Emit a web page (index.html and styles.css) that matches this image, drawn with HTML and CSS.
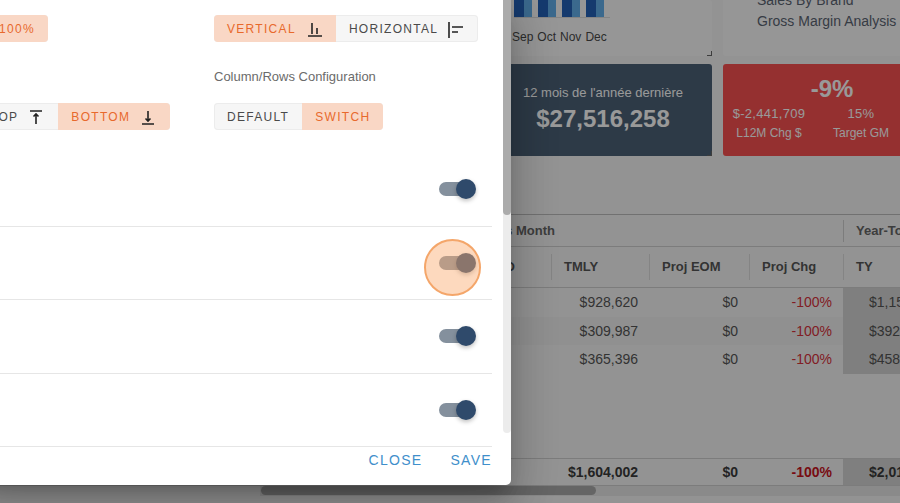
FILE: index.html
```html
<!DOCTYPE html>
<html lang="en">
<head>
    <meta charset="UTF-8">
    <title>Chart Settings</title>
    <link rel="stylesheet" href="styles.css">
</head>
<body>
    <div class="page">
        <main class="dashboard">
            <section class="tiles">
                <div class="tile chart-card">
                    <div class="bars">
                        <div class="bar-pair"><i></i><b></b></div>
                        <div class="bar-pair"><i></i><b></b></div>
                        <div class="bar-pair"><i></i><b></b></div>
                        <div class="bar-pair"><i></i><b></b></div>
                    </div>
                    <div class="months"><span>Sep</span><span>Oct</span><span>Nov</span><span>Dec</span></div>
                    <span class="resize-handle"></span>
                </div>
                <div class="tile links-card">
                    <div class="link-item">Sales By Brand</div>
                    <div class="link-item">Gross Margin Analysis</div>
                </div>
                <div class="tile kpi-dark">
                    <div class="kpi-label">12 mois de l'année dernière</div>
                    <div class="kpi-value">$27,516,258</div>
                    <span class="resize-handle"></span>
                </div>
                <div class="tile kpi-red">
                    <div class="kpi-percent">-9%</div>
                    <div class="kpi-split">
                        <div>
                            <div class="kpi-num">$-2,441,709</div>
                            <div class="kpi-cap">L12M Chg $</div>
                        </div>
                        <div>
                            <div class="kpi-num">15%</div>
                            <div class="kpi-cap">Target GM</div>
                        </div>
                    </div>
                </div>
            </section>

            <section class="report">
                <div class="report-row group-row">
                    <div class="cell group-this">This Month</div>
                    <div class="cell group-ytd">Year-To-Date</div>
                </div>
                <div class="report-row head-row">
                    <div class="cell head-first">MTD</div>
                    <div class="cell">TMLY</div>
                    <div class="cell">Proj EOM</div>
                    <div class="cell">Proj Chg</div>
                    <div class="cell">TY</div>
                </div>
                <div class="report-row data-row">
                    <div class="cell"></div>
                    <div class="cell num">$928,620</div>
                    <div class="cell num">$0</div>
                    <div class="cell num neg">-100%</div>
                    <div class="cell num ty">$1,154,220</div>
                </div>
                <div class="report-row data-row stripe">
                    <div class="cell"></div>
                    <div class="cell num">$309,987</div>
                    <div class="cell num">$0</div>
                    <div class="cell num neg">-100%</div>
                    <div class="cell num ty">$392,110</div>
                </div>
                <div class="report-row data-row">
                    <div class="cell"></div>
                    <div class="cell num">$365,396</div>
                    <div class="cell num">$0</div>
                    <div class="cell num neg">-100%</div>
                    <div class="cell num ty">$458,740</div>
                </div>
                <div class="report-spacer"></div>
                <div class="report-row total-row">
                    <div class="cell"></div>
                    <div class="cell num">$1,604,002</div>
                    <div class="cell num">$0</div>
                    <div class="cell num neg">-100%</div>
                    <div class="cell num ty">$2,010,070</div>
                </div>
            </section>

            <div class="hscroll"><span class="hscroll-thumb"></span></div>
        </main>

        <div class="scrim"></div>

        <div class="modal">
            <div class="modal-body">
                <div class="options">
                    <div class="option">
                        <div class="btn-group size-group">
                            <button class="active">100%</button>
                        </div>
                    </div>
                    <div class="option">
                        <div class="btn-group">
                            <button class="active">VERTICAL
                                <svg viewBox="0 0 18 18"><path d="M3 16h14M7 3v11M12 8v6" /></svg>
                            </button>
                            <button>HORIZONTAL
                                <svg viewBox="0 0 18 18"><path d="M2 2v16M5 7h11M5 12h6" /></svg>
                            </button>
                        </div>
                    </div>
                    <div class="option">
                        <div class="option-label"></div>
                        <div class="btn-group">
                            <button>TOP
                                <svg viewBox="0 0 18 18"><path d="M3 3h12M9 16V6M6.5 8.5 9 6l2.5 2.5" /></svg>
                            </button>
                            <button class="active">BOTTOM
                                <svg viewBox="0 0 18 18"><path d="M3 16h12M9 3v10M6.5 10.5 9 13l2.5-2.5" /></svg>
                            </button>
                        </div>
                    </div>
                    <div class="option">
                        <div class="option-label">Column/Rows Configuration</div>
                        <div class="btn-group">
                            <button>DEFAULT</button>
                            <button class="active">SWITCH</button>
                        </div>
                    </div>
                </div>

                <div class="toggle-row"><span class="toggle"></span></div>
                <div class="toggle-row">
                    <span class="toggle pressed"></span>
                </div>
                <div class="toggle-row"><span class="toggle"></span></div>
                <div class="toggle-row"><span class="toggle"></span></div>

                <div class="vscroll"><span class="vscroll-thumb"></span></div>
            </div>
            <div class="modal-actions">
                <button class="text-btn">CLOSE</button>
                <button class="text-btn">SAVE</button>
            </div>
        </div>
    </div>
</body>
</html>
```

FILE: styles.css
```css
* {
    box-sizing: border-box;
}
html, body {
    margin: 0;
    height: 100%;
    overflow: hidden;
}
body {
    font-family: "Liberation Sans", Arial, sans-serif;
}
.page {
    position: relative;
    width: 900px;
    height: 503px;
    overflow: hidden;
    background-color: #f6f6f6;
}

/* dashboard behind the dialog */
.dashboard {
    width: 900px;
    height: 503px;
    padding-left: 494px;
}
.tiles {
    display: grid;
    grid-template-columns: 218px 218px;
    grid-template-rows: 56px 92px;
    gap: 8px 11px;
}
.tile {
    position: relative;
    border-radius: 3px;
}
.chart-card, .links-card {
    background-color: #fbfbfb;
}
.bars {
    display: flex;
    gap: 6px;
    height: 18px;
    margin-left: 20px;
    width: 96px;
    padding-right: 6px;
    border-bottom: 1px solid #ddd;
}
.bar-pair {
    display: flex;
    width: 18px;
}
.bar-pair i {
    width: 10px;
    background-color: #2461b8;
}
.bar-pair b {
    width: 8px;
    background-color: #63b0ec;
}
.months {
    display: flex;
    gap: 4px;
    margin: 12px 0 0 18px;
    font-size: 12px;
    line-height: 14px;
    color: #4a4a4a;
}
.links-card {
    padding-left: 34px;
    margin-top: -7px;
    font-size: 14px;
    color: #5a6472;
}
.link-item {
    line-height: 21px;
    height: 21px;
}
.links-card .link-item:first-child {
    margin-top: -3px;
}
.links-card .link-item:last-child {
    margin-top: 0;
    line-height: 21px;
}
.resize-handle {
    position: absolute;
    right: 0;
    bottom: 0;
    width: 5px;
    height: 5px;
    border-right: 1px solid #666;
    border-bottom: 1px solid #666;
}
.kpi-dark {
    background-color: #4b6177;
    color: #fff;
    text-align: center;
    padding-top: 21px;
}
.kpi-label {
    font-size: 13px;
    line-height: 15px;
}
.kpi-value {
    font-size: 24px;
    font-weight: bold;
    line-height: 28px;
    margin-top: 5px;
}
.kpi-red {
    background-color: #f85050;
    color: #fff;
    text-align: center;
    padding-top: 11px;
}
.kpi-percent {
    font-size: 24px;
    font-weight: bold;
    line-height: 28px;
}
.kpi-split {
    display: grid;
    grid-template-columns: 92px 92px;
    margin: 3px 0 0 0;
}
.kpi-num {
    font-size: 13px;
    line-height: 15px;
    letter-spacing: 0.3px;
}
.kpi-cap {
    font-size: 12px;
    line-height: 14px;
    margin-top: 5px;
}

/* report table */
.report {
    margin-left: -494px;
    margin-top: 58px;
    color: #3b3b3b;
    font-size: 13px;
}
.report-row {
    display: grid;
    grid-template-columns: 551px 98px 100px 94px 57px;
}
.group-row {
    height: 33px;
    grid-template-columns: 843px 57px;
    border-top: 1px solid #bdbdbd;
    border-bottom: 1px solid #cfcfcf;
    align-items: center;
    font-weight: bold;
    color: #666;
    white-space: nowrap;
}
.group-this {
    text-align: right;
    padding-right: 288px;
}
.group-ytd {
    border-left: 1px solid #cfcfcf;
    padding-left: 12px;
    line-height: 22px;
}
.head-row {
    height: 41px;
    border-bottom: 1px solid #cfcfcf;
    align-items: center;
    font-weight: bold;
    color: #555;
    white-space: nowrap;
}
.head-row .cell {
    border-left: 1px solid #dcdcdc;
    padding-left: 12px;
    line-height: 26px;
}
.head-row .head-first {
    border-left: none;
    text-align: right;
    padding-right: 36px;
}
.data-row {
    height: 28.5px;
    line-height: 28px;
    font-size: 14px;
    white-space: nowrap;
    color: #555;
}
.stripe {
    background-color: #f0f0f0;
}
.num {
    text-align: right;
    padding-right: 11px;
}
.neg {
    color: #d8323c;
}
.ty {
    background-color: #d4d4d4;
    overflow: hidden;
    text-align: left;
    padding-left: 26px;
    padding-right: 0;
}
.report-spacer {
    height: 84px;
}
.total-row {
    height: 28px;
    line-height: 26px;
    font-weight: bold;
    font-size: 14px;
    white-space: nowrap;
    border-top: 1px solid #cfcfcf;
    border-bottom: 1px solid #cfcfcf;
}
.total-row .neg {
    color: #c8141e;
}
.hscroll {
    margin-left: -234px;
    height: 10px;
    background-color: #e6e6e6;
}
.hscroll-thumb {
    display: block;
    margin-left: 1px;
    width: 335px;
    height: 9px;
    border-radius: 5px;
    background-color: #a9a9a9;
}
.scrim {
    position: absolute;
    inset: 0;
    background-color: rgba(0, 0, 0, 0.4);
}

/* dialog */
.modal {
    position: absolute;
    top: 0;
    left: -23px;
    width: 534px;
    height: 485px;
    display: flex;
    flex-direction: column;
    background-color: #fff;
    border-radius: 0 0 5px 5px;
    box-shadow: 0 11px 15px -7px rgba(0, 0, 0, 0.2), 0 24px 38px 3px rgba(0, 0, 0, 0.14), 0 9px 46px 8px rgba(0, 0, 0, 0.12);
}
.modal-body {
    position: relative;
    height: 433px;
    padding: 15px 19px 0 0;
}
.options {
    display: grid;
    grid-template-columns: 237px auto;
    grid-template-rows: 27px 27px;
    row-gap: 61px;
    justify-content: start;
    height: 138px;
}
.option {
    position: relative;
}
.option-label {
    position: absolute;
    top: -34px;
    left: 0;
    font-size: 13px;
    line-height: 16px;
    color: #6b6b6b;
    white-space: nowrap;
}
.size-group {
    margin-left: 9px;
}
.btn-group {
    display: inline-flex;
    height: 27px;
    border-radius: 4px;
    background-color: #f6f6f6;
    box-shadow: 0 0 0 1px #ececec inset;
    overflow: hidden;
}
.btn-group button {
    display: flex;
    align-items: center;
    gap: 9px;
    height: 27px;
    padding: 0 13px;
    border: none;
    background: none;
    font-family: inherit;
    font-size: 12px;
    letter-spacing: 1.3px;
    color: #4a4a4a;
    white-space: nowrap;
}
.btn-group button.active {
    background-color: #f9d7c5;
    color: #e8692c;
}
.btn-group svg {
    width: 18px;
    height: 18px;
    fill: none;
    stroke: #222;
    stroke-width: 1.6;
}
.toggle-row {
    display: flex;
    justify-content: flex-end;
    align-items: center;
    height: 73.5px;
    padding-right: 19px;
    border-bottom: 1px solid #e6e6e6;
}
.toggle-row:first-of-type {
    height: 58px;
}
.toggle {
    position: relative;
    display: block;
    width: 34px;
    height: 14px;
    border-radius: 7px;
    background-color: #84909d;
}
.toggle::after {
    content: "";
    position: absolute;
    top: -3px;
    right: -3px;
    width: 20px;
    height: 20px;
    border-radius: 50%;
    background-color: #2f4a6b;
    box-shadow: 0 2px 4px rgba(0, 0, 0, 0.25);
}
.pressed::before {
    content: "";
    position: absolute;
    left: -15px;
    top: -17px;
    width: 53px;
    height: 53px;
    border-radius: 50%;
    border: 2px solid #f4a66a;
    background-color: rgba(250, 170, 110, 0.45);
    z-index: 2;
}
.pressed {
    box-shadow: 27px 0 0 0 transparent;
}
.vscroll {
    position: absolute;
    top: 0;
    right: 0;
    width: 8px;
    height: 433px;
    border-radius: 0 0 4px 4px;
    background-color: #ececec;
}
.vscroll-thumb {
    display: block;
    height: 215px;
    border-radius: 0 0 4px 4px;
    background-color: #ababab;
}
.modal-actions {
    display: flex;
    justify-content: flex-end;
    gap: 28px;
    padding: 19px 19px 0 0;
}
.text-btn {
    padding: 0;
    border: none;
    background: none;
    font-family: inherit;
    font-size: 14px;
    line-height: 16px;
    letter-spacing: 1.3px;
    color: #3f8fcb;
}
```
